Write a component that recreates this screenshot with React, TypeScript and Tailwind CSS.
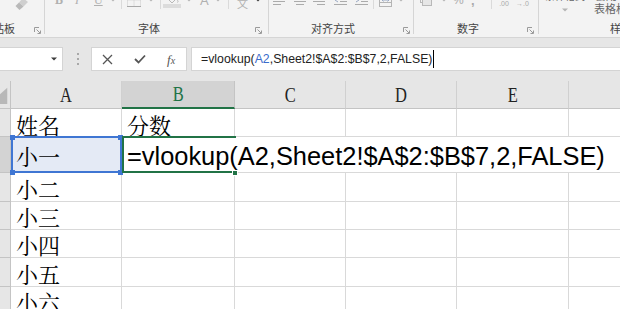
import React from 'react';

const ui = "font-['Liberation_Sans','Noto_Sans_CJK_SC',sans-serif]";
const cjk = "font-['Noto_Serif_CJK_SC','Noto_Sans_CJK_SC',serif]";

function Caret({ dark = false }: { dark?: boolean }) {
  return (
    <svg width="6" height="4" viewBox="0 0 6 4" className="shrink-0">
      <path d="M0 0.5h6L3 3.5z" fill={dark ? '#3c3c3c' : '#b4b4b4'} />
    </svg>
  );
}

function Launcher() {
  return (
    <svg width="7" height="7" viewBox="0 0 7 7" className="shrink-0">
      <path d="M0.5 5V0.5H5" stroke="#9a9a9a" fill="none" />
      <path d="M2.5 2.5L6 6" stroke="#9a9a9a" />
      <path d="M6.5 3.5V6.5H3.5" stroke="#9a9a9a" fill="none" />
    </svg>
  );
}

function Lines({ kind }: { kind: 'l' | 'c' | 'r' | 'dec' | 'inc' }) {
  const d =
    kind === 'l'
      ? 'M0 1.5h12M0 4.5h8M0 7.5h12M0 10.5h8'
      : kind === 'c'
      ? 'M0 1.5h12M2 4.5h8M0 7.5h12M2 10.5h8'
      : kind === 'r'
      ? 'M0 1.5h12M4 4.5h8M0 7.5h12M4 10.5h8'
      : 'M0 1.5h13M6 4.5h7M6 7.5h7M0 10.5h13';
  return (
    <svg width="13" height="12" viewBox="0 0 13 12" className="shrink-0">
      <path d={d} stroke="#ababab" />
      {kind === 'dec' && <path d="M4 4L1 6L4 8" stroke="#9aa9c4" fill="none" />}
      {kind === 'inc' && <path d="M1 4L4 6L1 8" stroke="#9aa9c4" fill="none" />}
    </svg>
  );
}

function Ribbon() {
  return (
    <div className={`h-[38px] flex bg-[#f3f3f3] border-b border-[#d5d5d5] overflow-hidden text-[#444] ${cjk}`}>
      {/* clipboard */}
      <div className="w-[44px] shrink-0 flex flex-col">
        <div className="h-[20px] -mt-[10px] flex items-center">
          <svg width="13" height="12" viewBox="0 0 13 12" className="ml-[15px] self-end">
            <path d="M8 0L13 4L8.5 8.5L4 4.5Z" fill="#cfcfcf" />
            <path d="M4 4.5L8.5 8.5L4.5 12L0.5 8Z" fill="#b9b9b9" />
          </svg>
        </div>
        <div className="flex-1" />
        <div className="h-[14px] mb-px flex items-center">
          <span className={`-ml-[18px] text-[11px] leading-[14px] whitespace-nowrap ${ui}`}>剪贴板</span>
          <div className="flex-1" />
          <div className="mr-[3px] mt-[2px]"><Launcher /></div>
        </div>
      </div>
      <div className="w-px shrink-0 bg-[#d5d5d5] mb-[3px]" />

      {/* font */}
      <div className="w-[223px] shrink-0 flex flex-col">
        <div className="h-[20px] -mt-[10px] flex items-center text-[#b0b0b0] font-['Liberation_Serif',serif]">
          <span className="ml-[10px] w-[7px] text-[12px] leading-none font-bold">B</span>
          <span className="ml-[13px] w-[4px] text-[12px] leading-none italic">I</span>
          <span className="ml-[15px] w-[7px] text-[12px] leading-none underline">U</span>
          <span className="ml-[9px]"><Caret /></span>
          <span className="ml-[5px] w-px h-[18px] bg-[#dadada]" />
          <svg width="14" height="14" viewBox="0 0 14 14" className="ml-[5px] shrink-0">
            <rect x="0.5" y="0.5" width="13" height="13" fill="none" stroke="#c8c8c8" strokeDasharray="1 1" />
            <path d="M0.5 7H13.5M7 0.5V13.5" stroke="#c8c8c8" strokeDasharray="1 1" />
            <path d="M0 13.5H14" stroke="#a8a8a8" />
          </svg>
          <span className="ml-[7px]"><Caret /></span>
          <span className="ml-[6px] w-px h-[18px] bg-[#dadada]" />
          <svg width="18" height="16" viewBox="0 0 18 16" className="ml-[2px] shrink-0">
            <path d="M4 6L9 1L14 6L9 11Z" fill="none" stroke="#b8b8b8" />
            <path d="M14 7.5c1 1.5 1.5 2.5 0.5 3" stroke="#b8b8b8" fill="none" />
            <rect x="0" y="12" width="18" height="4" fill="#dcdcdc" />
          </svg>
          <span className="ml-[5px]"><Caret /></span>
          <span className={`ml-[8px] w-[8px] text-[13px] leading-none ${ui}`}>A</span>
          <span className="ml-[7px]"><Caret /></span>
          <span className="ml-[7px] w-px h-[18px] bg-[#dadada]" />
          <span className={`ml-[6px] w-[15px] self-end flex flex-col items-center ${ui}`}>
            <span className="text-[6px] leading-[7px]">wén</span>
            <span className="text-[11px] leading-[11px]">文</span>
          </span>
          <span className="ml-[5px]"><Caret dark /></span>
        </div>
        <div className="flex-1" />
        <div className="h-[14px] mb-px flex items-center">
          <span className={`ml-[93px] text-[11px] leading-[14px] whitespace-nowrap ${ui}`}>字体</span>
          <div className="flex-1" />
          <div className="mr-[6px] mt-[2px]"><Launcher /></div>
        </div>
      </div>
      <div className="w-px shrink-0 bg-[#d5d5d5] mb-[3px]" />

      {/* alignment */}
      <div className="w-[144px] shrink-0 flex flex-col">
        <div className="h-[20px] -mt-[10px] flex items-center">
          <span className="ml-[4px]"><Lines kind="l" /></span>
          <span className="ml-[8px]"><Lines kind="c" /></span>
          <span className="ml-[6px]"><Lines kind="r" /></span>
          <span className="ml-[8px]"><Lines kind="dec" /></span>
          <span className="ml-[8px]"><Lines kind="inc" /></span>
          <span className="ml-[5px] w-px h-[18px] bg-[#dadada]" />
          <svg width="13" height="14" viewBox="0 0 13 14" className="ml-[5px] shrink-0">
            <rect x="0.5" y="0.5" width="12" height="13" fill="none" stroke="#b4b4b4" />
            <path d="M0.5 4.5h12M0.5 9.5h12" stroke="#b4b4b4" />
            <path d="M3 7h7M4.5 5.5L3 7L4.5 8.5M8.5 5.5L10 7L8.5 8.5" stroke="#9aa9c4" fill="none" />
          </svg>
          <span className="ml-[6px]"><Caret /></span>
        </div>
        <div className="flex-1" />
        <div className="h-[14px] mb-px flex items-center">
          <span className={`ml-[42px] text-[11px] leading-[14px] whitespace-nowrap ${ui}`}>对齐方式</span>
          <div className="flex-1" />
          <div className="mr-[3px] mt-[2px]"><Launcher /></div>
        </div>
      </div>
      <div className="w-px shrink-0 bg-[#d5d5d5] mb-[3px]" />

      {/* number */}
      <div className="w-[124px] shrink-0 flex flex-col">
        <div className={`h-[20px] -mt-[10px] flex items-center text-[#ababab] ${ui}`}>
          <svg width="12" height="12" viewBox="0 0 12 12" className="ml-[6px] shrink-0">
            <rect x="0.5" y="2.5" width="9" height="6" fill="none" stroke="#b8b8b8" />
            <rect x="2.5" y="5.5" width="9" height="6" fill="#e6e6e6" stroke="#b8b8b8" />
          </svg>
          <span className="ml-[9px]"><Caret /></span>
          <span className="ml-[6px] w-[10px] text-[12px] leading-none">%</span>
          <span className="ml-[8px] w-[5px] text-[13px] leading-none font-bold">,</span>
          <span className="ml-[15px] w-px h-[18px] bg-[#dadada]" />
          <span className="ml-[6px] w-[12px] flex flex-col items-center text-[7px] leading-[8px]">
            <span>←.0</span>
            <span>.00</span>
          </span>
          <span className="ml-[5px] w-[15px] flex flex-col items-center text-[7px] leading-[8px]">
            <span>.00</span>
            <span>→.0</span>
          </span>
        </div>
        <div className="flex-1" />
        <div className="h-[14px] mb-px flex items-center">
          <span className={`ml-[43px] text-[11px] leading-[14px] whitespace-nowrap ${ui}`}>数字</span>
          <div className="flex-1" />
          <div className="mr-[4px] mt-[2px]"><Launcher /></div>
        </div>
      </div>
      <div className="w-px shrink-0 bg-[#d5d5d5] mb-[3px]" />

      {/* styles */}
      <div className={`flex-1 min-w-0 flex flex-col ${ui}`}>
        <div className="h-[26px] -mt-[10px] flex items-start text-[#666]">
          <div className="ml-[4px] w-[44px] shrink-0 flex flex-col items-center">
            <span className="text-[10px] leading-[13px] whitespace-nowrap">条件格式</span>
            <span className="mt-[5px]"><Caret /></span>
          </div>
          <div className="ml-[4px] shrink-0 flex flex-col items-start">
            <span className="ml-[4px] text-[11px] leading-[13px] whitespace-nowrap">套用</span>
            <span className="ml-[3px] text-[11px] leading-[13px] whitespace-nowrap">表格格式</span>
          </div>
        </div>
        <div className="flex-1" />
        <div className="h-[14px] mb-px flex items-center">
          <span className="ml-[71px] text-[11px] leading-[14px] whitespace-nowrap">样式</span>
        </div>
      </div>
    </div>
  );
}

function FormulaBar() {
  return (
    <div className="h-[43px] bg-[#e6e6e6] pt-[9px]">
      <div className="h-[24px] flex">
        <div className="-ml-px w-[64px] shrink-0 bg-white border border-[#d4d4d4] flex items-center justify-end pr-[5px]">
          <Caret dark />
        </div>
        <div className="ml-[13px] w-[3px] shrink-0 flex flex-col items-center justify-center gap-[3px]">
          <span className="w-[2px] h-[2px] bg-[#a8a8a8]" />
          <span className="w-[2px] h-[2px] bg-[#a8a8a8]" />
          <span className="w-[2px] h-[2px] bg-[#a8a8a8]" />
        </div>
        <div className="ml-[12px] w-[96px] shrink-0 bg-white border border-[#d4d4d4] flex items-center">
          <svg width="11" height="11" viewBox="0 0 11 11" className="ml-[10px] shrink-0">
            <path d="M1 1L10 10M10 1L1 10" stroke="#555" strokeWidth="1.3" />
          </svg>
          <svg width="12" height="10" viewBox="0 0 12 10" className="ml-[21px] shrink-0">
            <path d="M1 5L4.5 8.5L11 1.5" stroke="#555" strokeWidth="1.8" fill="none" />
          </svg>
          <span className="ml-[21px] font-['Liberation_Serif',serif] italic text-[13px] leading-none text-[#555]">
            f<span className="text-[10px]">x</span>
          </span>
        </div>
        <div className={`ml-[4px] flex-1 -mr-px bg-white border border-[#d4d4d4] flex items-center pl-[9px] text-[12.3px] text-[#222] whitespace-nowrap ${ui}`}>
          <span>=vlookup(</span>
          <span className="text-[#3a6ccb]">A2</span>
          <span>,Sheet2!$A$2:$B$7,2,FALSE)</span>
          <span className="ml-px w-px h-[18px] bg-black" />
        </div>
      </div>
    </div>
  );
}

const letter = "inline-block scale-x-75 font-['Liberation_Serif',serif] text-[22px] leading-none";

function HeaderRow() {
  return (
    <div className="h-[28px] flex bg-[#e6e6e6] text-[#222]">
      <div className="w-[11px] shrink-0 border-r border-b border-[#c4c4c4] flex items-end">
        <svg width="11" height="27" viewBox="0 0 11 27">
          <polygon points="8,6 8,24 -12,24" fill="#b8b8b8" />
        </svg>
      </div>
      <div className="w-[111px] shrink-0 border-r border-b border-[#d0d0d0] border-b-[#c4c4c4] flex items-center justify-center">
        <span className={letter}>A</span>
      </div>
      <div className="w-[113px] shrink-0 bg-[#d3d3d3] border-r border-[#c4c4c4] border-b-2 border-b-[#217346] flex items-center justify-center text-[#217346]">
        <span className={letter}>B</span>
      </div>
      {['C', 'D', 'E'].map((c, i) => (
        <div
          key={c}
          className={`${i === 2 ? 'w-[112px]' : 'w-[111px]'} shrink-0 border-r border-b border-[#d0d0d0] border-b-[#c4c4c4] flex items-center justify-center`}
        >
          <span className={letter}>{c}</span>
        </div>
      ))}
      <div className="w-[112px] shrink-0 border-b border-[#c4c4c4] flex items-center justify-center">
        <span className={letter}>F</span>
      </div>
    </div>
  );
}

const rows = [
  { name: '小二', h: 'h-[29px]' },
  { name: '小三', h: 'h-[28px]' },
  { name: '小四', h: 'h-[28px]' },
  { name: '小五', h: 'h-[29px]' },
  { name: '小六', h: 'h-[28px]' },
];

const cell = 'shrink-0 border-r border-b border-[#d9d9d9]';

function Grid() {
  return (
    <div className="overflow-hidden">
      <HeaderRow />

      {/* row 1 */}
      <div className={`h-[28px] flex ${cjk} text-[22px] leading-[22px] text-black`}>
        <div className="w-[11px] shrink-0 bg-[#e6e6e6] border-r border-b border-[#c4c4c4]" />
        <div className={`w-[111px] ${cell} flex items-end pl-[5px]`}>姓名</div>
        <div className={`w-[113px] ${cell} flex items-end pl-[5px]`}>分数</div>
        <div className={`w-[111px] ${cell}`} />
        <div className={`w-[111px] ${cell}`} />
        <div className={`w-[112px] ${cell}`} />
        <div className={`w-[112px] ${cell}`} />
      </div>

      {/* row 2 — editing B2 */}
      <div className="h-[36px] flex">
        <div className="w-[11px] shrink-0 bg-[#d3d3d3] border-r border-b border-[#c4c4c4]" />
        <div className={`relative w-[111px] ${cell} bg-[#e4eaf5] flex items-end pl-[5px] pb-[5px] ${cjk} text-[22px] leading-[22px] text-black`}>
          小一
          <div className="absolute -top-px left-0 -right-px -bottom-px border-2 border-[#3f76d3]" />
          <span className="absolute -top-[2px] -left-[1px] w-[5px] h-[5px] bg-[#3f76d3]" />
          <span className="absolute -top-[2px] -right-[2px] w-[5px] h-[5px] bg-[#3f76d3]" />
          <span className="absolute -bottom-[3px] -left-[1px] w-[5px] h-[5px] bg-[#3f76d3]" />
          <span className="absolute -bottom-[3px] -right-[2px] w-[5px] h-[5px] bg-[#3f76d3]" />
        </div>
        <div className="relative z-10 w-[113px] shrink-0 border-b border-[#d9d9d9] flex items-end pl-[5px] pb-[3px]">
          <span className={`relative z-10 whitespace-nowrap text-[25.4px] leading-[25px] text-black ${ui}`}>
            =vlookup(A2,Sheet2!$A$2:$B$7,2,FALSE)
          </span>
          <div className="absolute -top-px left-0 -right-px -bottom-px border-2 border-r-0 border-[#217346]" />
          <span className="absolute -bottom-[4px] -right-[3px] w-[6px] h-[6px] bg-[#217346] border border-white" />
        </div>
        <div className="w-[111px] shrink-0 border-b border-[#d9d9d9]" />
        <div className="w-[111px] shrink-0 border-b border-[#d9d9d9]" />
        <div className="w-[112px] shrink-0 border-b border-[#d9d9d9]" />
        <div className="w-[112px] shrink-0 border-b border-[#d9d9d9]" />
      </div>

      {rows.map((r) => (
        <div key={r.name} className={`${r.h} flex ${cjk} text-[22px] leading-[22px] text-black`}>
          <div className="w-[11px] shrink-0 bg-[#e6e6e6] border-r border-b border-[#c4c4c4]" />
          <div className={`w-[111px] ${cell} flex items-end pl-[5px] pb-px`}>{r.name}</div>
          <div className={`w-[113px] ${cell}`} />
          <div className={`w-[111px] ${cell}`} />
          <div className={`w-[111px] ${cell}`} />
          <div className={`w-[112px] ${cell}`} />
          <div className={`w-[112px] ${cell}`} />
        </div>
      ))}
    </div>
  );
}

export default function App() {
  return (
    <div className={`w-[620px] h-[309px] overflow-hidden bg-white ${ui}`}>
      <Ribbon />
      <FormulaBar />
      <Grid />
    </div>
  );
}
